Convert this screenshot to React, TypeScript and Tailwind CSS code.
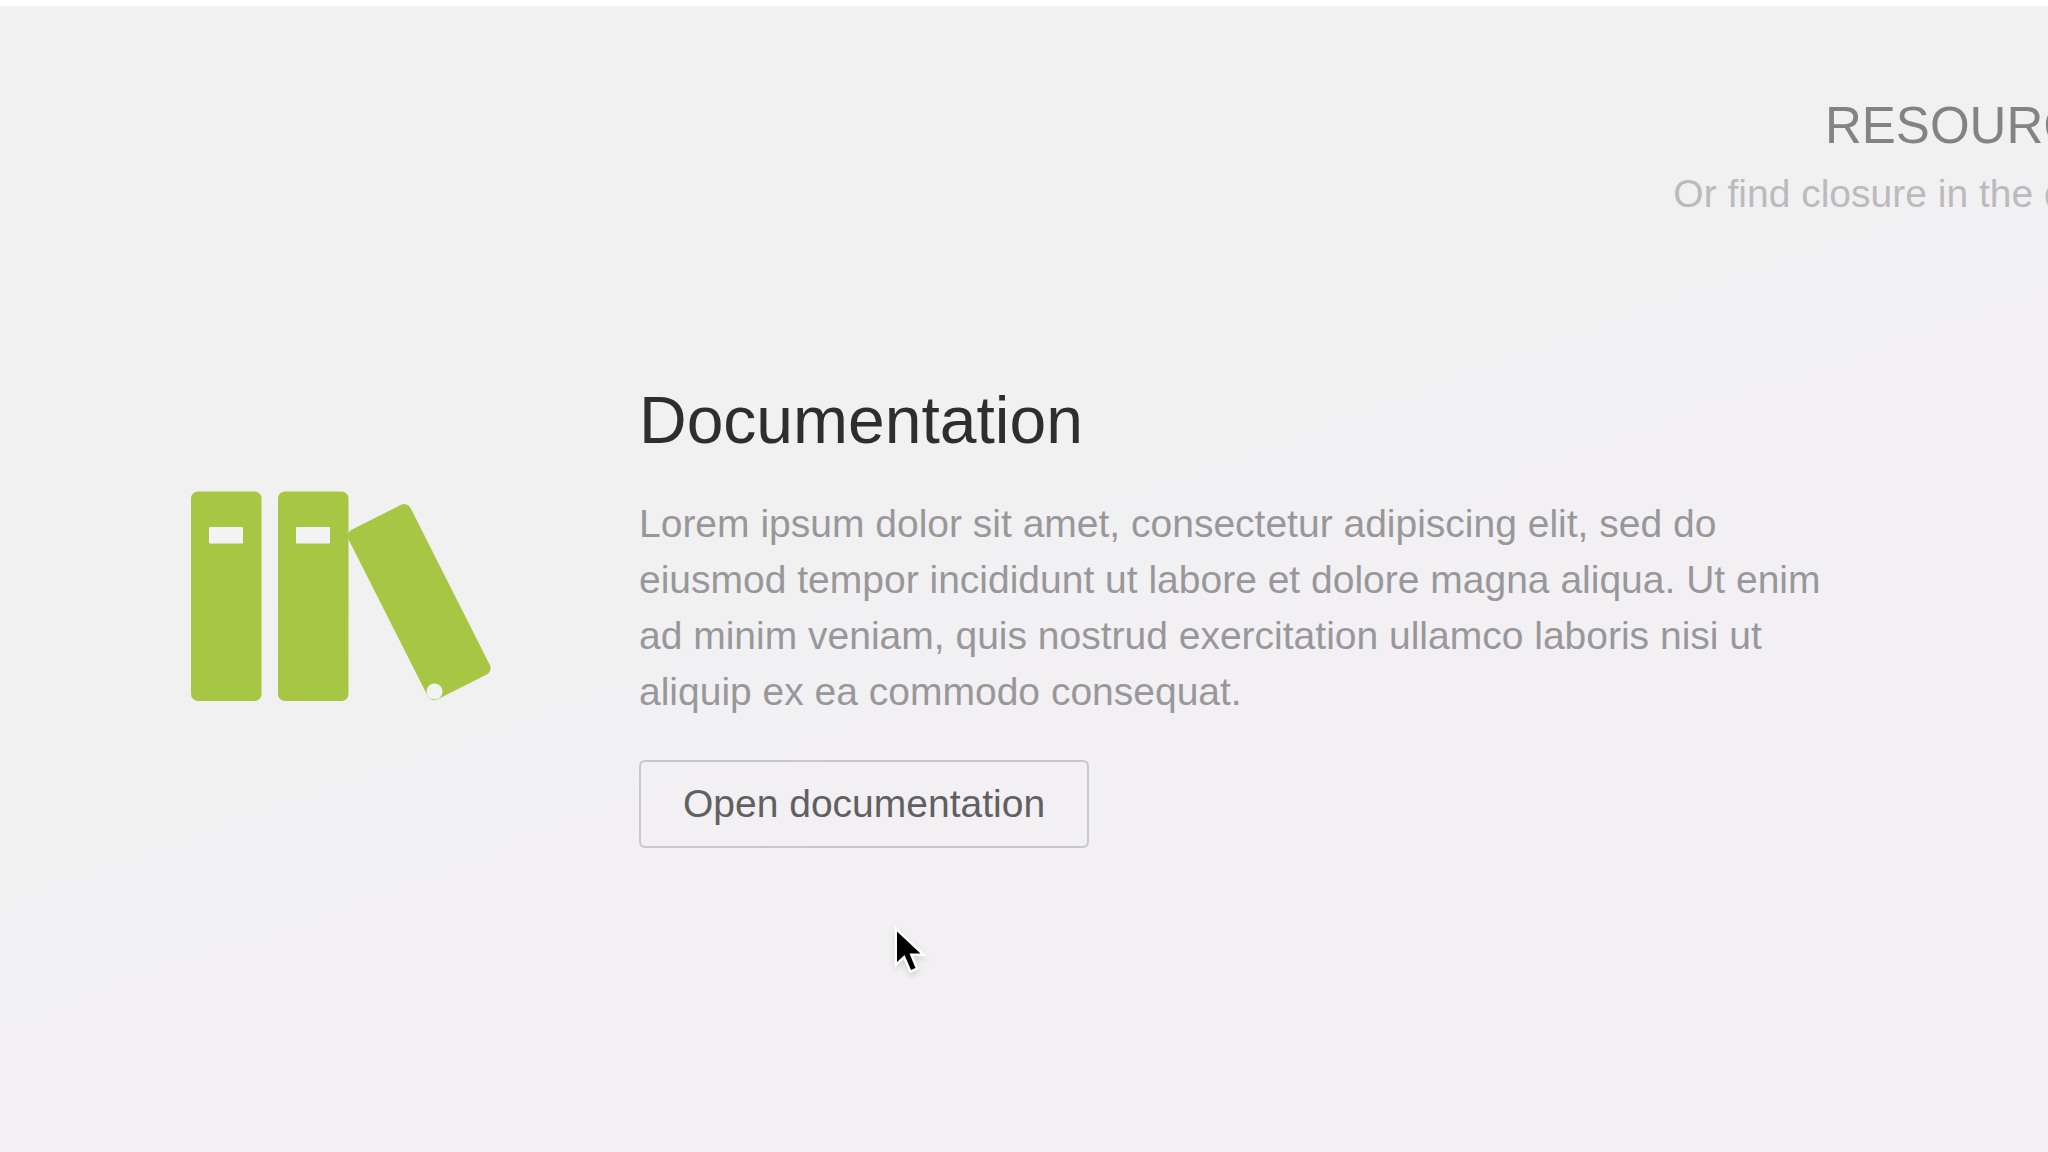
function BooksIcon() {
  return (
    <svg viewBox="0 0 300 210" className="w-[300px] shrink-0 overflow-visible" aria-hidden="true">
      <g fill="#a7c644">
        <rect x="0" y="0.5" width="70.5" height="209.5" rx="7" />
        <rect x="87" y="0.5" width="70.5" height="209.5" rx="7" />
        <rect x="0" y="0" width="69.5" height="190" rx="7" transform="translate(154.3 42) rotate(-26.8)" />
      </g>
      <g fill="#f3f3f3">
        <rect x="18" y="36" width="34" height="16.5" rx="1" />
        <rect x="105" y="36" width="34" height="16.5" rx="1" />
        <circle cx="243.5" cy="200.5" r="8" />
      </g>
    </svg>
  );
}

function Pointer() {
  return (
    <svg
      viewBox="0 0 40 52"
      className="pointer-events-none absolute left-[892px] top-[918px] w-10 drop-shadow-md"
      aria-hidden="true"
    >
      <path
        d="M5 7.5V38l7.5-7 6.5 15 4.5-2-6-14.500H28.500z"
        fill="#000"
        stroke="#fff"
        strokeWidth="5"
        strokeLinejoin="miter"
        paintOrder="stroke"
      />
    </svg>
  );
}

export default function App() {
  return (
    <main className="relative min-h-screen overflow-hidden border-t-6 border-white bg-linear-160 from-[#f1f1f1] from-35% to-[#f2f0f3] to-60% font-['Liberation_Sans',Arial,sans-serif]">
      <header className="w-[194%] pt-[90px] text-center">
        <h1 className="text-[51px] leading-[60px] text-[#838385]">RESOURCES</h1>
        <p className="mt-[10px] text-[39px] leading-14 text-[#bbbbbd]">
          Or find closure in the documentation
        </p>
      </header>

      <section className="mt-[158px] flex items-center gap-[148px] pl-[191px]">
        <div className="shrink-0 pb-9">
          <BooksIcon />
        </div>
        <div className="max-w-[1200px]">
          <h2 className="text-[66px] leading-20 text-[#2e2e2e]">Documentation</h2>
          <p className="mt-9 text-[39px] leading-14 text-[#98989a]">
            Lorem ipsum dolor sit amet, consectetur adipiscing elit, sed do eiusmod tempor incididunt
            ut labore et dolore magna aliqua. Ut enim ad minim veniam, quis nostrud exercitation
            ullamco laboris nisi ut aliquip ex ea commodo consequat.
          </p>
          <button
            type="button"
            className="mt-10 rounded-md border-2 border-[#c8c7ca] px-[42px] py-[14px] text-[39px] leading-14 text-[#606062]"
          >
            Open documentation
          </button>
        </div>
      </section>

      <Pointer />
    </main>
  );
}
